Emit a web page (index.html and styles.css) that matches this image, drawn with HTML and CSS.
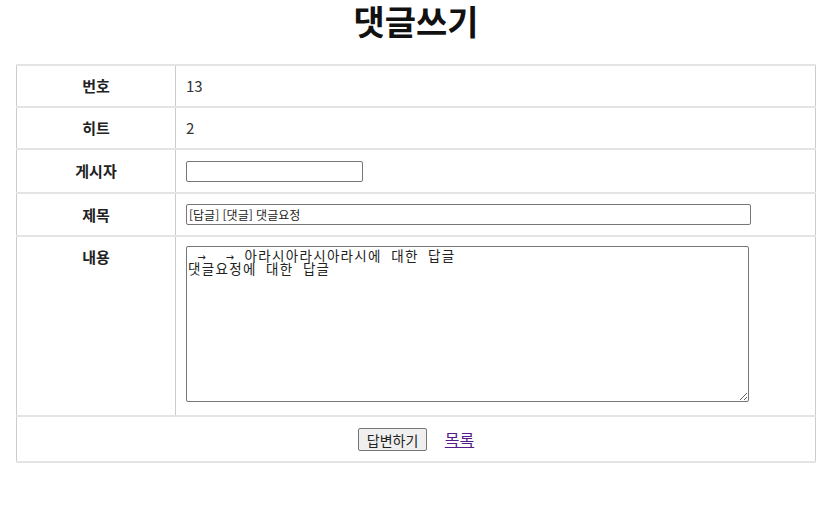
FILE: index.html
```html
<!DOCTYPE html>
<html lang="ko">
<head>
<meta charset="utf-8">
<title>댓글쓰기</title>
<link rel="stylesheet" href="styles.css">
</head>
<body>
<h1 class="title">댓글쓰기</h1>
<form class="board-form">
<table class="board">
  <tr>
    <th class="label">번호</th>
    <td class="value">13</td>
  </tr>
  <tr>
    <th class="label">히트</th>
    <td class="value">2</td>
  </tr>
  <tr>
    <th class="label">게시자</th>
    <td class="value"><input class="field field-short" type="text"></td>
  </tr>
  <tr>
    <th class="label">제목</th>
    <td class="value"><input class="field field-long" type="text" value="[답글] [댓글] 댓글요정"></td>
  </tr>
  <tr>
    <th class="label label-top">내용</th>
    <td class="value"><textarea class="content"> →  → 아라시아라시아라시에 대한 답글
댓글요정에 대한 답글</textarea></td>
  </tr>
  <tr>
    <td class="actions" colspan="2">
      <button type="button" class="btn">답변하기</button>
      <a class="link" href="#">목록</a>
    </td>
  </tr>
</table>
</form>
</body>
</html>
```
FILE: styles.css
```css
html, body {
  background: #fff;
}
body {
  margin: 0 12px 0 16px;
  font-family: "Noto Sans CJK KR", "Noto Sans", sans-serif;
  color: #333;
}
.title {
  margin: 0 0 22px;
  text-align: center;
  font-size: 34px;
  line-height: 42px;
  font-weight: 700;
  color: #111;
}
.board-form {
  margin: 0;
}
.board {
  width: 800px;
  border-collapse: collapse;
  border-left: 1px solid #ccc;
  border-right: 1px solid #ccc;
}
.board tr {
  border-top: 2px solid #e4e4e4;
  border-bottom: 2px solid #e4e4e4;
}
.label {
  width: 138px;
  padding: 9px 10px;
  border-right: 1px solid #ccc;
  font-size: 15px;
  line-height: 22px;
  font-weight: 700;
  color: #222;
  text-align: center;
  vertical-align: middle;
}
.label-top {
  vertical-align: top;
}
.value {
  padding: 9px 10px;
  font-size: 15px;
  line-height: 22px;
  text-align: left;
  vertical-align: middle;
}
.field {
  box-sizing: border-box;
  height: 21px;
  border: 1px solid #767676;
  border-radius: 2px;
  padding: 1px 2px;
  font-family: "Noto Sans CJK KR", sans-serif;
  font-size: 12px;
  color: #222;
  display: block;
}
.field-short {
  width: 177px;
  margin: 2px 0 1px;
}
.field-long {
  width: 565px;
  margin: 1px 0 1px;
}
.content {
  box-sizing: border-box;
  display: block;
  width: 563px;
  height: 156px;
  margin: 0 0 4px;
  border: 1px solid #767676;
  border-radius: 2px;
  padding: 3px 1px 2px;
  font-family: "DejaVu Sans Mono", "Noto Sans CJK KR", monospace;
  font-size: 13.5px;
  letter-spacing: 1.3px;
  line-height: 13px;
  color: #222;
  resize: both;
}
.actions {
  padding: 9px 10px 10px;
  line-height: 23px;
  text-align: center;
}
.btn {
  box-sizing: border-box;
  height: 23px;
  padding: 0 8px;
  margin-right: 13px;
  border: 1px solid #767676;
  border-radius: 2px;
  background: #efefef;
  font-family: "Noto Sans CJK KR", sans-serif;
  font-size: 14px;
  line-height: 20px;
  color: #222;
  vertical-align: middle;
}
.link {
  font-size: 16px;
  color: #551a8b;
  vertical-align: middle;
}
```
